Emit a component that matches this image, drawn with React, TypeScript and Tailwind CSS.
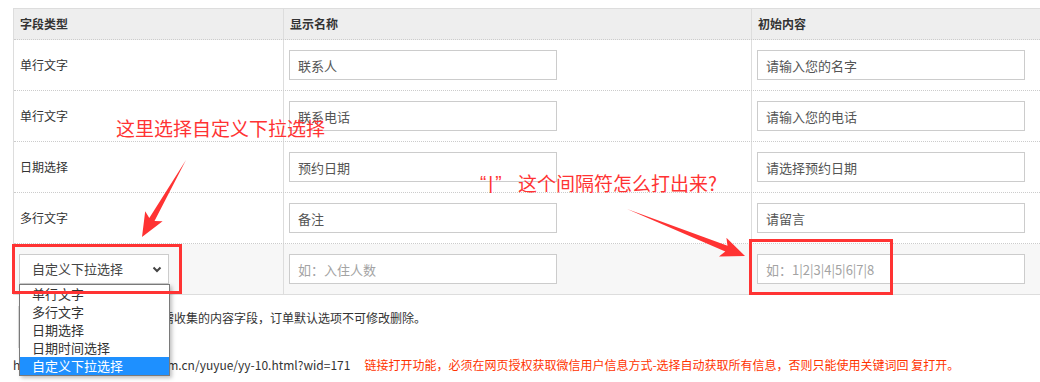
const rows = [
  { type: "单行文字", name: "联系人", init: "请输入您的名字" },
  { type: "单行文字", name: "联系电话", init: "请输入您的电话" },
  { type: "日期选择", name: "预约日期", init: "请选择预约日期" },
  { type: "多行文字", name: "备注", init: "请留言" },
];

const options = ["单行文字", "多行文字", "日期选择", "日期时间选择", "自定义下拉选择"];

function Field({ value, placeholder }: { value?: string; placeholder?: string }) {
  return (
    <input
      readOnly
      defaultValue={value}
      placeholder={placeholder}
      className="h-[30px] w-[268px] border border-[#ccc] bg-white pl-[8px] text-[13px] text-[#555] outline-none placeholder:text-[#a3a3a3]"
    />
  );
}

export default function App() {
  return (
    <div className="relative h-[382px] w-[1040px] overflow-hidden bg-white font-['Noto_Sans_CJK_SC','Microsoft_YaHei',sans-serif] text-[12px] text-[#333]">
      <div className="ml-[13px] mt-[8px] w-[1027px] border-l border-t border-[#ddd]">
        <div className="grid h-[31px] grid-cols-[269px_468px_1fr] border-b border-dotted border-[#ccc] bg-[#eee] font-bold">
          <div className="flex items-center pl-[6px]">字段类型</div>
          <div className="flex items-center border-l border-[#ddd] pl-[6px]">显示名称</div>
          <div className="flex items-center border-l border-[#ddd] pl-[6px]">初始内容</div>
        </div>

        {rows.map((r, i) => (
          <div
            key={i}
            className="grid h-[51px] grid-cols-[269px_468px_1fr] border-b border-dotted border-[#ccc]"
          >
            <div className="flex items-center pl-[6px]">{r.type}</div>
            <div className="flex items-center border-l border-[#ddd] pl-[5px]">
              <Field value={r.name} />
            </div>
            <div className="flex items-center border-l border-[#ddd] pl-[5px]">
              <Field value={r.init} />
            </div>
          </div>
        ))}

        <div className="grid h-[51px] grid-cols-[269px_468px_1fr] border-b border-[#ddd] bg-[#f7f7f7]">
          <div className="flex items-center pl-[5px]">
            <div className="flex h-[30px] w-[150px] items-center justify-between border border-[#ccc] bg-white pl-[12px] pr-[6px] text-[13px] text-[#444]">
              <span>自定义下拉选择</span>
              <svg width="10" height="7" viewBox="0 0 10 7">
                <polyline points="1.5,1.5 5,5 8.5,1.5" fill="none" stroke="#444" strokeWidth="2" />
              </svg>
            </div>
          </div>
          <div className="flex items-center border-l border-[#ddd] pl-[5px]">
            <Field placeholder="如：入住人数" />
          </div>
          <div className="flex items-center border-l border-[#ddd] pl-[5px]">
            <Field placeholder="如：1|2|3|4|5|6|7|8" />
          </div>
        </div>
      </div>

      <div className="ml-[18px] mt-[11px] h-[42px] border-l-2 border-[#ddd] pl-[10px] leading-[24px]">
        说明：在这里设置预约时需收集的内容字段，订单默认选项不可修改删除。
      </div>

      <div className="ml-[13px] mt-[7px] flex h-[20px] items-center whitespace-nowrap">
        <span>http://ww.wechatsystem.com.cn/yuyue/yy-10.html?wid=171</span>
        <span className="ml-[14px] text-[#ff3300]">
          链接打开功能，必须在网页授权获取微信用户信息方式-选择自动获取所有信息，否则只能使用关键词回 复打开。
        </span>
      </div>

      {/* opened select list */}
      <div className="absolute left-[19px] top-[284px] w-[151px] border border-[#7a7a7a] bg-white text-[13px] text-[#333] shadow-[2px_2px_4px_rgba(0,0,0,0.25)]">
        {options.map((o, i) => (
          <div
            key={o}
            className={`flex h-[18px] items-center pl-[12px] ${
              i === options.length - 1 ? "bg-[#1e90ff] text-white" : ""
            }`}
          >
            {o}
          </div>
        ))}
      </div>

      {/* annotations */}
      <div className="absolute left-[12px] top-[244px] h-[50px] w-[170px] border-[3px] border-[#ff3333]" />
      <div className="absolute left-[749px] top-[239px] h-[56px] w-[144px] border-[3px] border-[#ff3333]" />

      <div className="absolute left-[116px] top-[116px] text-[19px] leading-[24px] text-[#ff3333]">
        这里选择自定义下拉选择
      </div>
      <div className="absolute left-[480px] top-[171px] flex whitespace-nowrap text-[19px] leading-[24px] text-[#ff3333]">
        <span className="inline-block w-[38px] font-['Liberation_Sans',sans-serif] tracking-[2px]">“|”</span>
        <span>这个间隔符怎么打出来?</span>
      </div>

      <svg className="pointer-events-none absolute left-0 top-0" width="1040" height="382">
        <polygon
          points="186,160 154.5,221.1 162.6,221.2 142,237 145.2,211.2 149.3,218.1"
          fill="#ff3333"
        />
        <polygon
          points="627,209 727.5,245.8 726.4,237.8 745,256 719,256.4 725.3,251.4"
          fill="#ff3333"
        />
      </svg>
    </div>
  );
}
